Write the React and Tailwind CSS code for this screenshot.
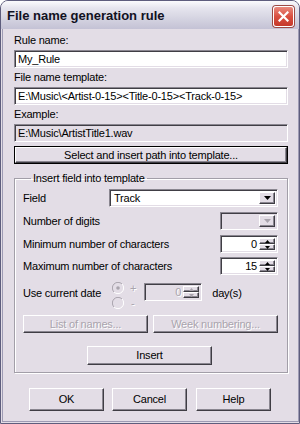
const sunken =
  "border border-t-[#8a8690] border-l-[#8a8690] border-b-white border-r-white shadow-[inset_1px_1px_0_#403e45,inset_-1px_-1px_0_#e3dde6]";
const raised =
  "border border-t-white border-l-white border-b-[#3f3d44] border-r-[#3f3d44] shadow-[inset_-1px_-1px_0_#8a8690]";
const disabledText = "text-[#a9a4ad] [text-shadow:1px_1px_0_#ffffff]";

function Label({ children, className = "" }) {
  return <div className={"h-[13px] leading-[13px] whitespace-nowrap " + className}>{children}</div>;
}

function Edit({ children, className = "", bg = "bg-white" }) {
  return (
    <div className={`h-[18px] ${bg} ${sunken} flex items-center pl-[3px] whitespace-nowrap overflow-hidden leading-[13px] ${className}`}>
      {children}
    </div>
  );
}

function Arrow({ dir = "down", color = "#000", size = 7 }) {
  const h = Math.ceil(size / 2);
  const pts = dir === "down" ? `0,0 ${size},0 ${size / 2},${h}` : `0,${h} ${size},${h} ${size / 2},0`;
  return (
    <svg width={size} height={h} viewBox={`0 0 ${size} ${h}`} className="block">
      <polygon points={pts} fill={color} />
    </svg>
  );
}

function DropBtn({ disabled }) {
  return (
    <div className={`w-[16px] h-full bg-[#e3dde6] ${raised} flex items-center justify-center`}>
      <Arrow dir="down" color={disabled ? "#a9a4ad" : "#000"} size={7} />
    </div>
  );
}

function Select({ value, disabled, className = "" }) {
  return (
    <div className={`h-[18px] ${disabled ? "bg-[#e3dde6]" : "bg-white"} ${sunken} flex p-[2px] ${className}`}>
      <div className="flex-1 pl-[2px] leading-[13px] flex items-center">{value}</div>
      <DropBtn disabled={disabled} />
    </div>
  );
}

function SpinBtns({ disabled }) {
  const c = disabled ? "#a9a4ad" : "#000";
  return (
    <div className="w-[16px] h-full flex flex-col">
      <div className={`flex-1 bg-[#e3dde6] ${raised} flex items-center justify-center`}>
        <Arrow dir="up" color={c} size={5} />
      </div>
      <div className={`flex-1 bg-[#e3dde6] ${raised} flex items-center justify-center`}>
        <Arrow dir="down" color={c} size={5} />
      </div>
    </div>
  );
}

function Spin({ value, disabled, className = "" }) {
  return (
    <div className={`h-[18px] ${disabled ? "bg-[#e3dde6]" : "bg-white"} ${sunken} flex p-[2px] ${className}`}>
      <div className={`flex-1 pr-[2px] text-right leading-[13px] flex items-center justify-end ${disabled ? disabledText : ""}`}>{value}</div>
      <SpinBtns disabled={disabled} />
    </div>
  );
}

function Button({ children, className = "", disabled, def }) {
  const inner = (
    <div className={`h-full w-full bg-[#e3dde6] ${raised} flex items-center justify-center whitespace-nowrap ${disabled ? disabledText : ""}`}>
      {children}
    </div>
  );
  if (def) return <div className={`border border-black ${className}`}>{inner}</div>;
  return <div className={className}>{inner}</div>;
}

function Radio({ checked }) {
  return (
    <svg width="12" height="12" viewBox="0 0 12 12" className="block">
      <circle cx="6" cy="6" r="5.5" fill="#e3dde6" />
      <path d="M10 2 A5.5 5.5 0 0 0 2 10" stroke="#a9a4ad" strokeWidth="1" fill="none" />
      <path d="M2 10 A5.5 5.5 0 0 0 10 2" stroke="#ffffff" strokeWidth="1" fill="none" />
      <circle cx="6" cy="6" r="4" fill="#e3dde6" />
      {checked && <circle cx="6" cy="6" r="1.8" fill="#a9a4ad" />}
    </svg>
  );
}

function CloseBtn() {
  return (
    <div className="mt-[5px] self-start w-[21px] h-[21px] rounded-[3px] border border-white bg-[linear-gradient(to_bottom,#e98a7e,#d94f40_50%,#c5392b)] shadow-[0_0_0_1px_#9c4a45] flex items-center justify-center">
      <svg width="11" height="11" viewBox="0 0 11 11">
        <path d="M1.5 1.5 L9.5 9.5 M9.5 1.5 L1.5 9.5" stroke="#ffffff" strokeWidth="2.2" strokeLinecap="square" />
      </svg>
    </div>
  );
}

export default function App() {
  return (
    <div className="w-[300px] h-[424px] bg-white font-['Liberation_Sans',Arial,sans-serif] text-[11px] tracking-[-0.2px] text-black">
      <div className="w-[300px] h-[424px] flex flex-col border border-[#5e5d7d] rounded-t-[8px] overflow-hidden bg-[#e3dde6]">
        <div className="h-[28px] shrink-0 flex pl-[6px] pr-[5px] bg-[linear-gradient(to_bottom,#fbfbfd_0%,#e6e5ee_25%,#d6d5e2_60%,#c4c2d5_100%)]">
          <span className="flex-1 self-center text-[13px] font-bold tracking-normal leading-none text-[#111122] whitespace-nowrap">
            File name generation rule
          </span>
          <CloseBtn />
        </div>
        <div className="flex-1 px-[1px] pb-[1px] flex">
          <div className="flex-1 flex flex-col border-x border-b border-[#9e9bb4] pl-[11px] pr-[10px] pt-[5px]">
            <Label>Rule name:</Label>
            <Edit className="mt-[3px]">My_Rule</Edit>
            <Label className="mt-[3px]">File name template:</Label>
            <Edit className="mt-[3px]">{"E:\\Music\\<Artist-0-15><Title-0-15><Track-0-15>"}</Edit>
            <Label className="mt-[3px]">Example:</Label>
            <Edit className="mt-[3px]" bg="bg-[#e3dde6]">{"E:\\Music\\ArtistTitle1.wav"}</Edit>
            <Button def className="mt-[4px] h-[18px]">Select and insert path into template...</Button>

            <fieldset className="mt-[7px] border border-[#a29ea8] shadow-[1px_1px_0_#ffffff,inset_1px_1px_0_#ffffff] pl-[8px] pr-[9px] pt-[4px] pb-[7px]">
              <legend className="ml-[8px] px-[2px] h-[14px] leading-[14px]">Insert field into template</legend>
              <div className="flex items-center h-[18px]">
                <div className="w-[86px]">Field</div>
                <Select className="flex-1" value="Track" />
              </div>
              <div className="flex items-center h-[18px] mt-[5px]">
                <div className="flex-1">Number of digits</div>
                <Select className="w-[58px]" value="" disabled />
              </div>
              <div className="flex items-center h-[18px] mt-[5px]">
                <div className="flex-1">Minimum number of characters</div>
                <Spin className="w-[58px]" value="0" />
              </div>
              <div className="flex items-center h-[18px] mt-[4px]">
                <div className="flex-1">Maximum number of characters</div>
                <Spin className="w-[58px]" value="15" />
              </div>
              <div className="flex items-start h-[26px] mt-[6px]">
                <div className="w-[89px] mt-[6px] leading-[13px]">Use current date</div>
                <div className="flex flex-col mt-[1px] gap-[3px]">
                  <div className="flex items-center h-[12px]">
                    <Radio checked />
                    <span className={`ml-[6px] leading-[12px] ${disabledText}`}>+</span>
                  </div>
                  <div className="flex items-center h-[12px]">
                    <Radio />
                    <span className={`ml-[7px] leading-[12px] ${disabledText}`}>-</span>
                  </div>
                </div>
                <Spin className="ml-[8px] mt-[2px] w-[58px]" value="0" disabled />
                <div className="ml-[10px] mt-[6px] leading-[13px]">day(s)</div>
              </div>
              <div className="flex gap-[5px] mt-[8px]">
                <Button disabled className="w-[125px] h-[18px]">List of names...</Button>
                <Button disabled className="w-[125px] h-[18px]">Week numbering...</Button>
              </div>
              <div className="flex justify-start mt-[13px] pl-[64px]">
                <Button className="w-[125px] h-[19px]">Insert</Button>
              </div>
            </fieldset>

            <div className="flex mt-[15px] pl-[15px]">
              <Button className="w-[75px] h-[23px]">OK</Button>
              <Button className="w-[75px] h-[23px] ml-[8px]">Cancel</Button>
              <Button className="w-[75px] h-[23px] ml-[9px]">Help</Button>
            </div>
          </div>
        </div>
      </div>
    </div>
  );
}
